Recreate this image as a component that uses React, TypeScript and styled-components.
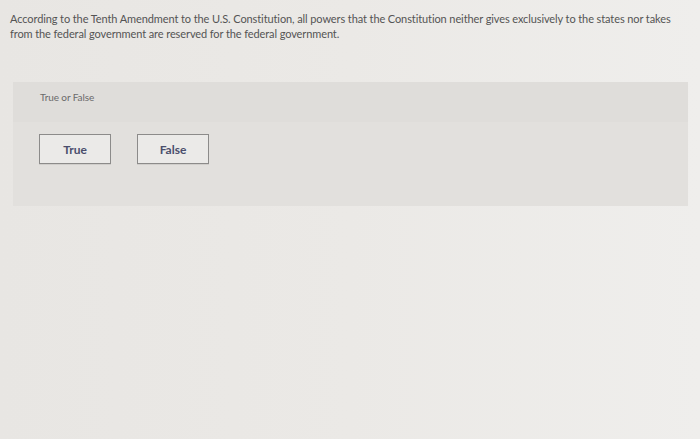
import React from 'react';
import styled, { createGlobalStyle } from 'styled-components';

const GlobalStyle = createGlobalStyle`
  html, body {
    margin: 0;
    padding: 0;
    background: #ebe9e6;
  }
  body {
    font-family: 'Lato', 'Open Sans', sans-serif;
  }
`;

const Page = styled.div`
  width: 700px;
  height: 439px;
  box-sizing: border-box;
  padding: 11px 12px 0 10px;
  background: linear-gradient(90deg, #e8e6e3 0%, #ebe9e6 50%, #efeeec 100%);
`;

const Question = styled.p`
  margin: 0;
  font-size: 11px;
  line-height: 15px;
  color: #545454;
  letter-spacing: -0.1px;
`;

const Card = styled.div`
  margin: 41px 0 0 3px;
  width: 675px;
  background: #e2e0dd;
`;

const CardHeader = styled.div`
  height: 40px;
  box-sizing: border-box;
  padding: 9px 0 0 27px;
  background: #dfddda;
`;

const Label = styled.div`
  font-size: 10px;
  line-height: 12px;
  color: #6a6a6a;
  letter-spacing: -0.1px;
`;

const Choices = styled.div`
  display: flex;
  gap: 26px;
  padding: 12px 0 42px 26px;
`;

const Choice = styled.button`
  width: 72px;
  height: 30px;
  box-sizing: border-box;
  border: 1px solid #8c8b8a;
  background: #ebeae8;
  color: #4a4e6c;
  font-family: 'Lato', sans-serif;
  font-weight: 700;
  font-size: 12px;
  padding: 0;
  box-shadow: 0 1px 0 #d0cecb;
`;

const App = () => (
  <>
    <GlobalStyle />
    <Page>
      <Question>
        According to the Tenth Amendment to the U.S. Constitution, all powers that the Constitution neither gives exclusively to the states nor takes
        from the federal government are reserved for the federal government.
      </Question>
      <Card>
        <CardHeader>
          <Label>True or False</Label>
        </CardHeader>
        <Choices>
          <Choice>True</Choice>
          <Choice>False</Choice>
        </Choices>
      </Card>
    </Page>
  </>
);

export default App;
